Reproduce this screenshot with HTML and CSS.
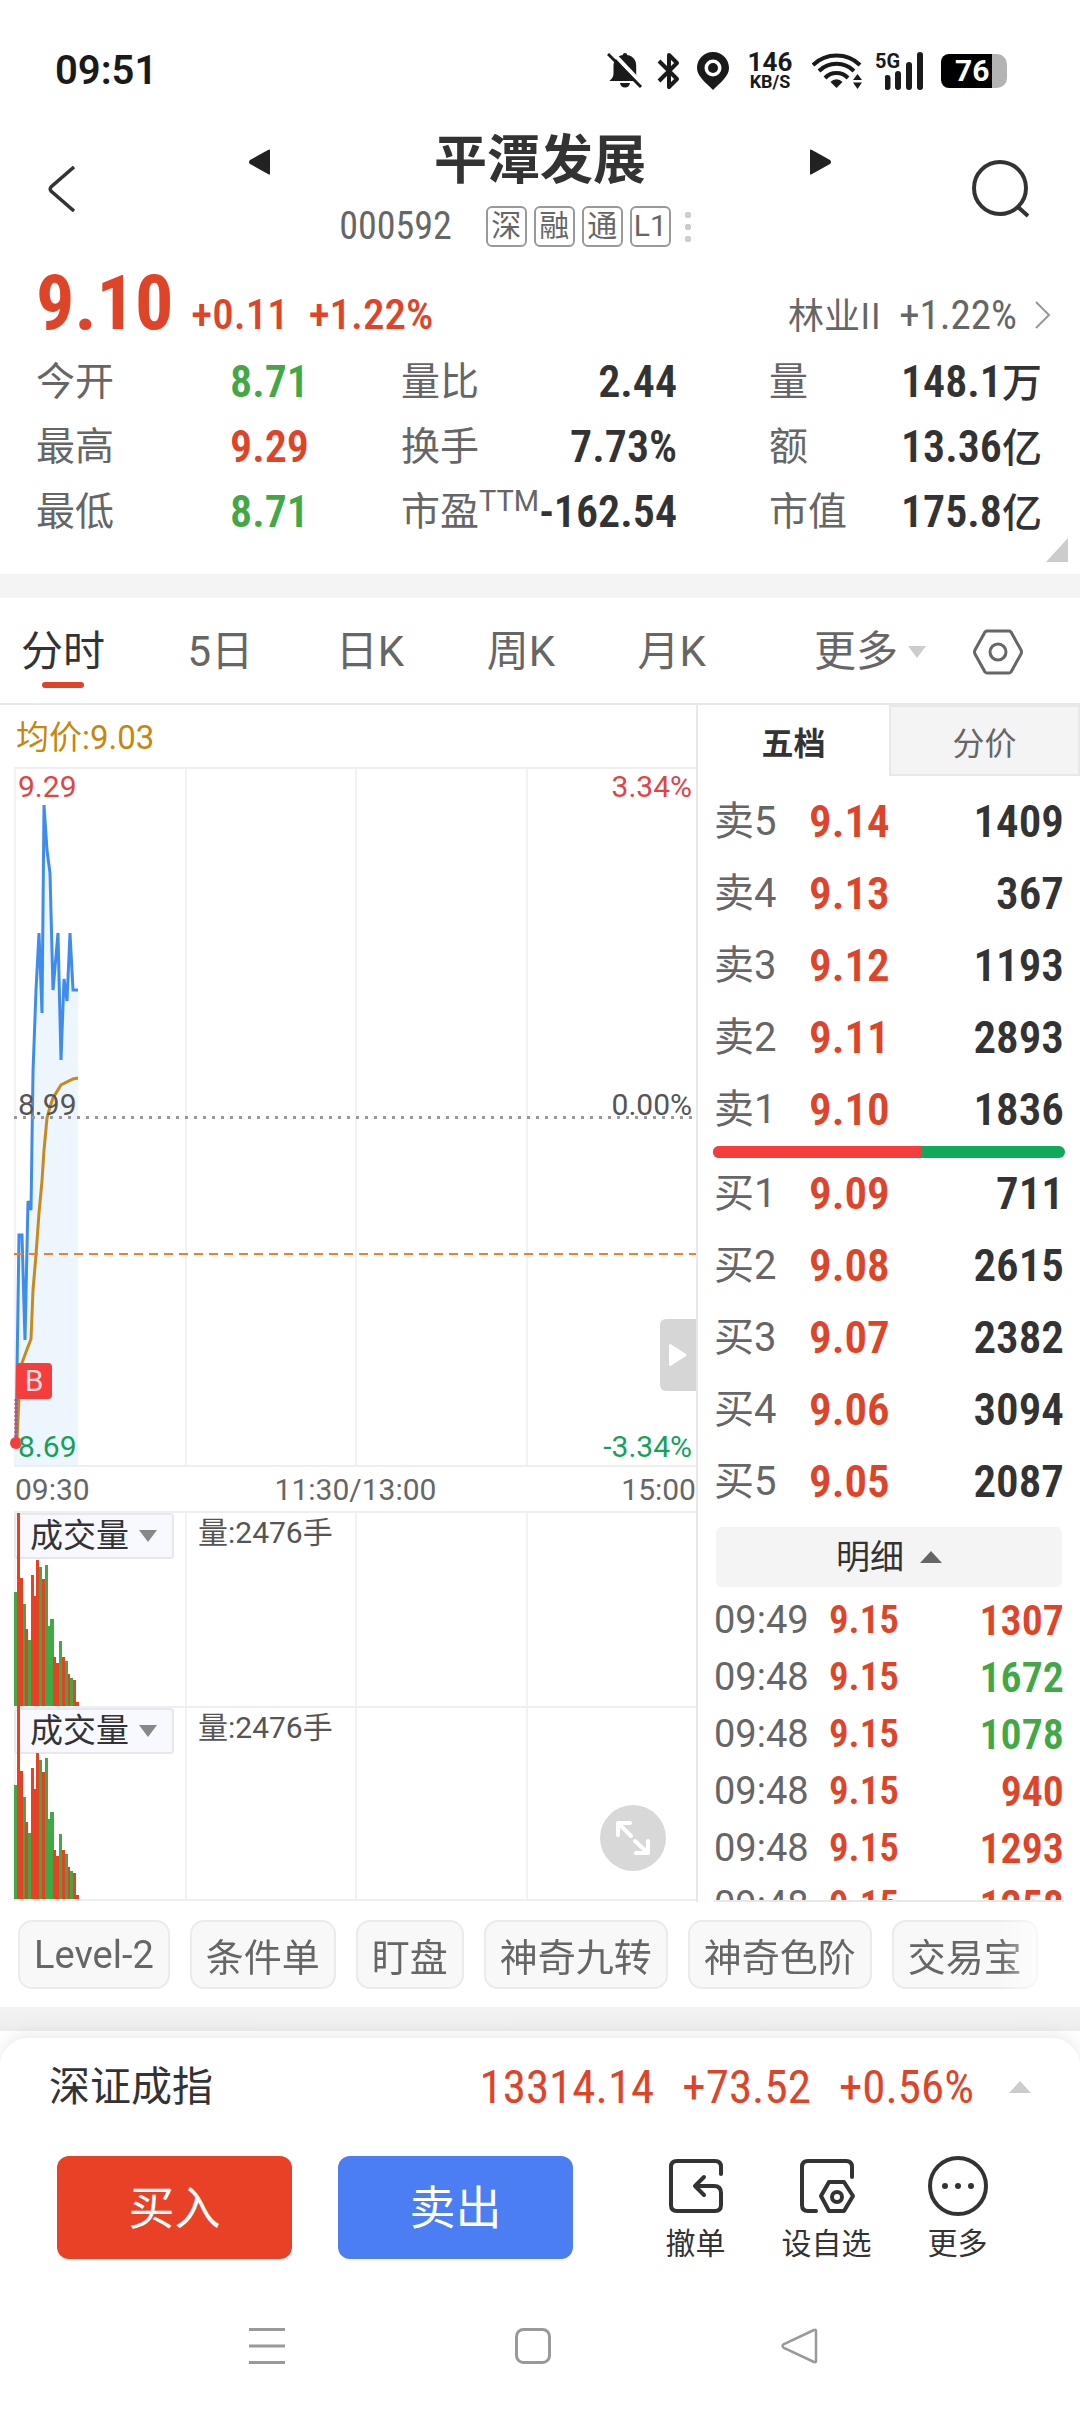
FILE: index.html
```html
<!DOCTYPE html>
<html lang="zh-CN">
<head>
<meta charset="utf-8">
<meta name="viewport" content="width=device-width, initial-scale=1">
<title>平潭发展 000592</title>
<link rel="stylesheet" href="styles.css">
</head>
<body>
<div class="status">
  <span class="clock">09:51</span>
  <div class="status-icons">
    <svg width="36" height="38" viewBox="0 0 36 38"><path d="M18 1c1.500 0 2 .8 2.200 2 6 1 9 5.500 9 11v7c0 4 1.500 5.500 4 8H2.500C5 26.500 6.500 25 6.500 21v-7c0-6 3.500-10 9.300-11C16 1.800 16.500 1 18 1z" fill="#1a1a1a"/><path d="M13 31h10c-.5 3-2.500 4.500-5 4.500S13.500 34 13 31z" fill="#1a1a1a"/><path d="M4-1l34 36" stroke="#fff" stroke-width="4"/><path d="M1 2l33 33" stroke="#1a1a1a" stroke-width="3"/></svg>
    <svg class="bt" width="24" height="38" viewBox="0 0 24 38"><path d="M2 9l18 18-8 8V3l8 8L2 29" fill="none" stroke="#1a1a1a" stroke-width="4" stroke-linejoin="round"/></svg>
    <svg class="pin" width="32" height="38" viewBox="0 0 32 38"><path fill-rule="evenodd" d="M16 0C7 0 0 7 0 16c0 8 8 14 16 22 8-8 16-14 16-22C32 7 25 0 16 0zm0 7.500a8.500 8.500 0 1 1 0 17 8.500 8.500 0 0 1 0-17z" fill="#1a1a1a"/><circle cx="16" cy="16" r="5" fill="#1a1a1a"/></svg>
    <div class="speed"><span>146</span><small>KB/S</small></div>
    <svg class="wifi" width="52" height="38" viewBox="0 0 52 38"><g fill="none" stroke="#1a1a1a" stroke-width="4"><path d="M1 13a34 34 0 0 1 47 0"/><path d="M7 19a25 25 0 0 1 35 0"/><path d="M13 26a16 16 0 0 1 23 0"/></g><path d="M24.500 36l-6-6a8 8 0 0 1 12 0z" fill="#1a1a1a"/><path d="M41 28l4.500-6 4.500 6zM41 30.500h9L45.500 37z" fill="#1a1a1a"/></svg>
    <div class="cell"><small>5G</small><svg width="38" height="38" viewBox="0 0 38 38"><path d="M2.500 26v9M13 22v13M24 13v22M35 3v32" stroke="#1a1a1a" stroke-width="6" stroke-linecap="round"/></svg></div>
    <div class="battery"><span>76</span></div>
  </div>
</div>

<header class="top">
  <button class="icon-btn back" aria-label="返回"><svg width="28" height="46" viewBox="0 0 28 46"><path d="M26 1L3 21q-1.500 2 0 4L26 45" fill="none" stroke="#333" stroke-width="3.500"/></svg></button>
  <button class="icon-btn step" aria-label="上一只"><svg width="21" height="26" viewBox="0 0 21 26"><path d="M21 1v24q0 1-2 0L1 15q-2-2 0-4L19 1q2-1 2 0z" fill="#222"/></svg></button>
  <div class="title">
    <h1>平潭发展</h1>
    <div class="code"><span class="num">000592</span><div class="tags"><b>深</b><b>融</b><b>通</b><b>L1</b></div><i class="dots"></i></div>
  </div>
  <button class="icon-btn step" aria-label="下一只"><svg width="21" height="26" viewBox="0 0 21 26"><path d="M0 1v24q0 1 2 0L20 15q2-2 0-4L2 1Q0 0 0 1z" fill="#222"/></svg></button>
  <button class="icon-btn search" aria-label="搜索"><svg width="58" height="58" viewBox="0 0 58 58"><circle cx="28" cy="28" r="26" fill="none" stroke="#333" stroke-width="4"/><path d="M46 47l10 9" stroke="#333" stroke-width="4"/></svg></button>
</header>

<section class="quote">
  <div class="price-row num">
    <strong class="price">9.10</strong><span>+0.11</span><span>+1.22%</span>
    <a class="sector" href="#sector"><span class="cn">林业II</span><span>+1.22%</span><svg width="16" height="28" viewBox="0 0 16 28"><path d="M1 1l13 13L1 27" fill="none" stroke="#999" stroke-width="2"/></svg></a>
  </div>
  <dl class="stats">
    <div><dt>今开</dt><dd class="down">8.71</dd></div><div><dt>量比</dt><dd>2.44</dd></div><div><dt>量</dt><dd>148.1<em>万</em></dd></div>
    <div><dt>最高</dt><dd class="up">9.29</dd></div><div><dt>换手</dt><dd>7.73%</dd></div><div><dt>额</dt><dd>13.36<em>亿</em></dd></div>
    <div><dt>最低</dt><dd class="down">8.71</dd></div><div><dt>市盈<sup>TTM</sup></dt><dd>-162.54</dd></div><div><dt>市值</dt><dd>175.8<em>亿</em></dd></div>
  </dl>
  <i class="corner"></i>
</section>

<nav class="periods">
  <div class="period-list"><button class="on">分时</button><button>5日</button><button>日K</button><button>周K</button><button>月K</button></div>
  <button class="more">更多<i class="tri-down pale"></i></button>
  <button class="icon-btn" aria-label="设置"><svg width="50" height="46" viewBox="0 0 50 46"><path d="M14 2h22q1 0 2 1l10 18q1 2 0 4L38 43q-1 1-2 1H14q-1 0-2-1L2 25q-1-2 0-4L12 3q1-1 2-1z" fill="none" stroke="#666" stroke-width="3"/><circle cx="25" cy="23" r="8" fill="none" stroke="#666" stroke-width="3"/></svg></button>
</nav>

<main class="board">
  <section class="charts">
    <p class="avg">均价:9.03</p>
    <div class="plot">
      <div class="cols"><i></i><i></i><i></i><i></i></div>
      <svg class="series" width="90" height="696" viewBox="0 0 90 696">
        <path d="M2 696V672L5 466H8L11 571L14 432L17 441L19 303L22 221L25 164L28 244L30 36L33 81L36 104L39 221L44 164L47 291L50 210L53 232L56 164L59 221H64V696z" fill="#edf5fd"/>
        <path d="M3 672L5 628L8 594L12 583L17 570L19 521L22 486L25 444L28 412L30 381L33 349L36 338L39 329L47 316L59 310L64 309" fill="none" stroke="#c68a1f" stroke-width="3"/>
        <path d="M2 672L5 466H8L11 571L14 432L17 441L19 303L22 221L25 164L28 244L30 36L33 81L36 104L39 221L44 164L47 291L50 210L53 232L56 164L59 221H64" fill="none" stroke="#3f8ceb" stroke-width="3"/>
        <path d="M2 630v42" stroke="#f63d3d" stroke-width="3" stroke-dasharray="2 2"/>
        <circle cx="2" cy="674" r="6" fill="#f63d3d"/>
      </svg>
      <i class="line zero"></i><i class="line cost"></i>
      <div class="scale"><div class="hi"><span>9.29</span><span>3.34%</span></div><div class="mid"><span>8.99</span><span>0.00%</span></div><div class="lo"><span>8.69</span><span>-3.34%</span></div></div>
      <b class="mark">B</b>
      <button class="icon-btn drawer" aria-label="收起盘口"><svg width="18" height="22" viewBox="0 0 18 22"><path d="M0 1v20q1 2 3 0l14-9q1-1 0-2L3 1Q1-1 0 1z" fill="#fff"/></svg></button>
    </div>
    <div class="times"><span>09:30</span><span>11:30/13:00</span><span>15:00</span></div>
    <div class="vol">
      <div class="cols"><i></i><i></i><i></i><i></i></div>
      <button class="pick">成交量<i class="tri-down"></i></button>
      <svg class="bars" width="68" height="193" viewBox="0 0 68 193"><g id="volbars"><path fill="#42a846" d="M0 79h3V193H0zM9 91h3V193H9zM14 127h3V193h-3zM25 54h3V193h-3zM31 52h3V193h-3zM34 113h3V193h-3zM36 106h4V193h-4zM45 128h3V193h-3zM51 148h3V193h-3zM56 165h3V193h-3z"/><path fill="#e64125" d="M3 0h3V193H3zM6 65h3V193H6zM11 116h3V193h-3zM17 62h3V193h-3zM20 83h3V193h-3zM22 47h3V193h-3zM28 66h3V193h-3zM39 144h3V193h-3zM42 150h3V193h-3zM48 144h3V193h-3zM54 161h2V193h-2zM59 167h3V193h-3zM62 189h3V193h-3z"/></g></svg>
      <span class="vol-text">量:2476手</span>
    </div>
    <div class="vol">
      <div class="cols"><i></i><i></i><i></i><i></i></div>
      <button class="pick">成交量<i class="tri-down"></i></button>
      <svg class="bars" width="68" height="193" viewBox="0 0 68 193"><use href="#volbars"/></svg>
      <span class="vol-text">量:2476手</span>
      <button class="icon-btn expand" aria-label="全屏"><svg width="66" height="66" viewBox="0 0 66 66"><path d="M30 18H18v12M18 18l13 13M35 36l13 12M48 36v12H36" fill="none" stroke="#fff" stroke-width="4" stroke-linecap="round" stroke-linejoin="round"/></svg></button>
    </div>
  </section>

  <aside class="book">
    <div class="book-tabs"><button class="on">五档</button><button>分价</button></div>
    <table class="levels">
      <tr><th>卖5</th><td>9.14</td><td>1409</td></tr>
      <tr><th>卖4</th><td>9.13</td><td>367</td></tr>
      <tr><th>卖3</th><td>9.12</td><td>1193</td></tr>
      <tr><th>卖2</th><td>9.11</td><td>2893</td></tr>
      <tr><th>卖1</th><td>9.10</td><td>1836</td></tr>
    </table>
    <div class="ratio"><i></i></div>
    <table class="levels">
      <tr><th>买1</th><td>9.09</td><td>711</td></tr>
      <tr><th>买2</th><td>9.08</td><td>2615</td></tr>
      <tr><th>买3</th><td>9.07</td><td>2382</td></tr>
      <tr><th>买4</th><td>9.06</td><td>3094</td></tr>
      <tr><th>买5</th><td>9.05</td><td>2087</td></tr>
    </table>
    <button class="detail">明细<i class="tri-up"></i></button>
    <div class="ticks">
      <table>
        <tr><th>09:49</th><td>9.15</td><td class="up">1307</td></tr>
        <tr><th>09:48</th><td>9.15</td><td class="down">1672</td></tr>
        <tr><th>09:48</th><td>9.15</td><td class="down">1078</td></tr>
        <tr><th>09:48</th><td>9.15</td><td class="up">940</td></tr>
        <tr><th>09:48</th><td>9.15</td><td class="up">1293</td></tr>
        <tr><th>09:48</th><td>9.15</td><td class="up">1258</td></tr>
      </table>
    </div>
  </aside>
</main>

<div class="chips"><button>Level-2</button><button>条件单</button><button>盯盘</button><button>神奇九转</button><button>神奇色阶</button><button>交易宝</button><button aria-label="更多工具"></button></div>
<div class="band"></div>

<footer class="sheet">
  <div class="index"><span>深证成指</span><div class="index-num num"><span>13314.14</span><span>+73.52</span><span>+0.56%</span></div><i class="tri-up pale"></i></div>
  <div class="actions">
    <button class="trade buy">买入</button><button class="trade sell">卖出</button>
    <div class="tools">
      <button><svg width="60" height="60" viewBox="0 0 60 60"><path d="M55 18v-7q0-6-6-6H11q-6 0-6 6v38q0 6 6 6h38q6 0 6-6V37q0-7-7-7H29M38 21l-9 9 9 9" fill="none" stroke="#333" stroke-width="4" stroke-linecap="round" stroke-linejoin="round"/></svg>撤单</button>
      <button><svg width="60" height="60" viewBox="0 0 60 60"><path d="M55 21V11q0-6-6-6H11q-6 0-6 6v38q0 6 6 6h8" fill="none" stroke="#333" stroke-width="4" stroke-linecap="round"/><path d="M32 26h15l9 14-9 15H32l-8-15z" fill="none" stroke="#333" stroke-width="4" stroke-linejoin="round"/><circle cx="40" cy="41" r="5" fill="none" stroke="#333" stroke-width="4"/></svg>设自选</button>
      <button><svg width="60" height="60" viewBox="0 0 60 60"><circle cx="30" cy="30" r="28" fill="none" stroke="#333" stroke-width="4"/><g fill="#333"><circle cx="17" cy="30" r="3"/><circle cx="30" cy="30" r="3"/><circle cx="43" cy="30" r="3"/></g></svg>更多</button>
    </div>
  </div>
</footer>
<nav class="sysnav">
  <button class="icon-btn" aria-label="最近任务"><svg width="38" height="38" viewBox="0 0 38 38"><path d="M1 2.500h36M1 19h36M1 35.500h36" stroke="#999" stroke-width="3"/></svg></button>
  <button class="icon-btn" aria-label="主页"><svg width="38" height="38" viewBox="0 0 38 38"><rect x="2.500" y="2.500" width="33" height="33" rx="7" fill="none" stroke="#999" stroke-width="3"/></svg></button>
  <button class="icon-btn" aria-label="后退"><svg width="38" height="38" viewBox="0 0 38 38"><path d="M34 3q2-1 2 1v30q0 2-2 1L4 21q-3-2 0-4z" fill="none" stroke="#999" stroke-width="2.500"/></svg></button>
</nav>
</body>
</html>
```
FILE: styles.css
```css
* { box-sizing: border-box; }
body { margin: 0; background: #fff; color: #333; font-family: Roboto, "Noto Sans CJK SC", sans-serif; overflow-x: hidden; }
button { margin: 0; padding: 0; border: 0; background: none; color: inherit; font: inherit; }
svg { display: block; flex: none; }
i, em { font-style: normal; }
h1, p, dl, dd { margin: 0; }
.num, .stats dd, .levels td, .ticks td { font-family: "Roboto Condensed", "Liberation Sans Narrow", Roboto, "Noto Sans CJK SC", sans-serif; }
.icon-btn { display: flex; align-items: center; justify-content: center; }
.up { color: #e04428; }
.down { color: #42a846; }
.tri-down, .tri-up { display: block; flex: none; border: solid transparent; }
.tri-down { border-width: 12px 9px 0; border-top-color: #888; }
.tri-up { border-width: 0 11px 12px; border-bottom-color: #666; }
.tri-down.pale { border-top-color: #ccc; }
.tri-up.pale { border-bottom-color: #ccc; }

.status { display: flex; align-items: center; justify-content: space-between; height: 131px; padding: 10px 73px 0 55px; color: #1a1a1a; }
.clock { font-size: 40px; font-weight: 600; }
.status-icons { display: flex; align-items: center; }
.bt { margin-left: 14px; }
.pin { margin-left: 16px; }
.speed { display: flex; flex-direction: column; align-items: center; width: 46px; margin-left: 18px; font-size: 26px; font-weight: 700; line-height: 22px; }
.speed small { font-size: 18px; line-height: 18px; }
.wifi { margin-left: 19px; }
.cell { display: flex; width: 50px; margin-left: 11px; }
.cell small { width: 10px; font-size: 20px; font-weight: 700; line-height: 18px; }
.battery { width: 66px; height: 34px; margin-left: 16px; padding-left: 14px; border-radius: 8px 10px 10px 8px; background: linear-gradient(90deg, #000 77%, #b3b3b3 77%); color: #fff; font-size: 30px; font-weight: 700; line-height: 34px; }

.top { display: grid; grid-template-columns: 201px 21px 1fr 21px 199px; align-items: center; padding: 0 50px 16px 48px; }
.back { justify-content: flex-start; }
.search { justify-content: flex-end; }
.step { align-self: start; height: 62px; }
.title { display: flex; flex-direction: column; align-items: center; gap: 15px; }
h1 { font-size: 53px; line-height: 60px; }
.code { display: flex; align-items: center; padding-right: 50px; color: #666; font-size: 38px; line-height: 41px; }
.tags { display: flex; gap: 7px; margin: 0 14px 0 34px; }
.tags b { width: 41px; height: 41px; border: 2px solid #999; border-radius: 6px; font-size: 30px; font-weight: 400; line-height: 36px; text-align: center; }
.dots { width: 6px; height: 30px; background: radial-gradient(circle 3px at 3px 3px, #ccc 3px, transparent 3px) 0 0 / 6px 12px; }

.quote { position: relative; padding: 0 38px 29px 36px; border-bottom: 24px solid #f4f4f4; }
.price-row { display: flex; align-items: baseline; height: 87px; color: #e04428; font-size: 43px; font-weight: 500; line-height: 80px; }
.price { margin-right: 18px; font-size: 76px; }
.price-row > span { margin-right: 20px; }
.sector { display: flex; align-items: baseline; gap: 18px; margin: 0 -9px 0 auto; color: #666; font-size: 41px; font-weight: 400; text-decoration: none; }
.sector .cn { font-size: 36px; font-family: "Noto Sans CJK SC", sans-serif; }
.stats { display: grid; grid-template-columns: repeat(3, 1fr); column-gap: 92px; }
.stats div { display: flex; justify-content: space-between; height: 65px; line-height: 65px; white-space: nowrap; }
.stats dt { color: #666; font-size: 39px; }
.stats dd { font-size: 44px; font-weight: 600; }
.stats em { font-size: 40px; font-weight: 500; }
.stats sup { font-size: 29px; line-height: 0; }
.corner { position: absolute; right: 12px; bottom: 12px; border: solid transparent; border-width: 0 0 24px 22px; border-bottom-color: #ccc; }

.periods { display: flex; align-items: center; height: 107px; padding: 2px 57px 0 21px; border-bottom: 2px solid #e8e8e8; color: #666; font-size: 42px; line-height: 60px; }
.period-list { display: flex; flex: 1; justify-content: space-between; }
.period-list button { position: relative; }
.periods .on { color: #333; }
.periods .on::after { content: ""; position: absolute; left: 50%; bottom: -6px; width: 42px; height: 6px; margin-left: -21px; border-radius: 3px; background: #e04428; }
.more { display: flex; align-items: center; gap: 10px; margin: 0 47px 0 108px; }

.board { display: grid; grid-template-columns: 698fr 382fr; }
.charts { min-width: 0; padding-left: 14px; border-right: 2px solid #e8e8e8; }
.avg { height: 62px; padding-left: 2px; color: #c8860d; font-size: 33px; line-height: 66px; }
.plot { position: relative; height: 700px; border-bottom: 2px solid #efefef; border-top: 2px solid #efefef; }
.cols { position: absolute; inset: 0; display: flex; }
.cols i { flex: 1; border-left: 2px solid #f2f2f2; }
.series { position: relative; overflow: visible; }
.line { position: absolute; left: 0; right: 0; height: 2px; }
.zero { top: 347px; height: 3px; background: repeating-linear-gradient(90deg, #999 0 3px, transparent 3px 9px); }
.cost { top: 484px; background: repeating-linear-gradient(90deg, #f08030 0 9px, transparent 9px 15px); }
.scale { position: absolute; inset: 0; display: flex; flex-direction: column; justify-content: space-between; padding: 0 4px; font-size: 30px; line-height: 36px; }
.scale div { display: flex; justify-content: space-between; }
.hi { color: #e04444; }
.mid { padding-bottom: 24px; color: #555; }
.lo { color: #16a05c; }
.mark { position: absolute; left: 2px; top: 594px; width: 36px; height: 36px; border-radius: 4px; background: #f63d3d; color: #fdd; font-size: 30px; font-weight: 400; line-height: 36px; text-align: center; }
.drawer { position: absolute; right: 0; top: 550px; width: 36px; height: 72px; border-radius: 6px 0 0 6px; background: #d6d6d6; }
.times { display: flex; justify-content: space-between; height: 44px; padding-left: 1px; color: #666; font-size: 30px; line-height: 46px; }
.vol { position: relative; display: flex; align-items: flex-start; height: 195px; border-top: 2px solid #efefef; }
.vol:last-child { border-bottom: 2px solid #efefef; }
.pick { position: relative; display: flex; align-items: center; gap: 10px; width: 160px; height: 46px; padding-left: 14px; border: 2px solid #e8e8ec; border-radius: 4px; background: #f8f9ff; font-size: 33px; line-height: 40px; white-space: nowrap; }
.bars { position: absolute; left: 0; bottom: 0; }
.vol-text { position: relative; margin-left: 24px; color: #555; font-size: 30px; line-height: 40px; }
.expand { position: absolute; right: 30px; top: 97px; border-radius: 50%; background: #d8d8d8; }

.book { display: flex; flex-direction: column; }
.book-tabs { display: grid; grid-template-columns: 191fr 191fr; height: 71px; color: #666; font-size: 32px; }
.book-tabs button + button { border: 2px solid #e8e8e8; background: #f4f4f4; }
.book-tabs .on { color: #333; font-weight: 700; }
table { border-collapse: collapse; width: 100%; table-layout: fixed; }
th { padding: 0; color: #666; font-weight: 400; text-align: left; white-space: nowrap; }
td { padding: 0; font-weight: 600; }
td:nth-child(2) { color: #e04428; }
td:last-child { text-align: right; }
.levels { width: auto; margin: 10px 16px 0; font-size: 45px; line-height: 72px; }
.levels tr { height: 72px; }
.levels th { width: 95px; font-size: 40px; }
.ratio { height: 12px; margin: 0 15px; border-radius: 6px; background: #0ea95b; overflow: hidden; }
.ratio i { display: block; width: 59%; height: 100%; background: #f63d3d; }
.ratio + .levels { margin-top: 0; }
.detail { display: flex; align-items: center; justify-content: center; gap: 16px; height: 60px; margin: 9px 18px 0; border-radius: 6px; background: #f4f4f4; font-size: 34px; line-height: 56px; }
.ticks { height: 315px; margin: 0 16px; border-bottom: 2px solid #e8e8e8; overflow: hidden; line-height: 57px; }
.ticks table { margin-top: 5px; }
.ticks tr { height: 57px; }
.ticks th { width: 115px; font-size: 38px; }
.ticks td { font-size: 39px; }
.ticks td:last-child { font-size: 42px; }

.chips { display: flex; gap: 20px; margin-right: 18px; padding: 18px 0 18px 18px; overflow: hidden; color: #666; font-size: 38px; -webkit-mask-image: linear-gradient(90deg, #000 94%, transparent); mask-image: linear-gradient(90deg, #000 94%, transparent); }
.chips button { flex: none; height: 69px; padding: 0 14px; border: 2px solid #ebebeb; border-radius: 14px; background: #f8f8f8; }
.band { height: 24px; background: linear-gradient(#f4f4f4, #ececec); }
.sheet { position: relative; margin-top: 7px; padding: 0 57px 14px; border-radius: 28px 28px 0 0; background: #fff; box-shadow: 0 -4px 14px rgba(0, 0, 0, .08); }
.index { display: flex; align-items: center; height: 98px; margin: 0 -8px; font-size: 41px; line-height: 56px; }
.index-num { display: flex; gap: 28px; margin-left: auto; margin-right: 35px; color: #e04428; font-size: 47px; font-weight: 400; }
.actions { display: flex; gap: 46px; padding-top: 20px; }
.trade { flex: 1; height: 103px; border-radius: 12px; color: #fff; font-size: 46px; line-height: 60px; }
.buy { background: #e84125; }
.sell { background: #4b7ef2; }
.tools { display: flex; margin-left: 11px; }
.tools button { display: flex; flex-direction: column; align-items: center; gap: 6px; width: 131px; font-size: 30px; line-height: 44px; white-space: nowrap; }
.sysnav { position: relative; display: flex; justify-content: center; gap: 228px; height: 132px; padding-right: 14px; background: #fff; }
```
